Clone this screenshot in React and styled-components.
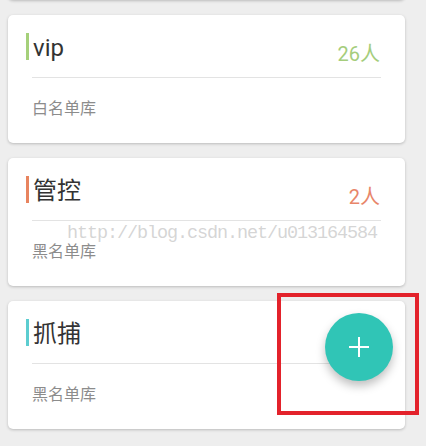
import React from 'react';
import styled, { createGlobalStyle } from 'styled-components';

const GlobalStyle = createGlobalStyle`
  html, body {
    margin: 0;
    padding: 0;
    background: #eeeeee;
  }
  body {
    font-family: Roboto, "Noto Sans CJK SC", sans-serif;
    overflow: hidden;
  }
`;

const Page = styled.div`
  position: relative;
  width: 426px;
  height: 446px;
  overflow: hidden;
  background: #eeeeee;
`;

// list is scrolled: the card above "vip" only shows its bottom edge
const List = styled.div`
  display: flex;
  flex-direction: column;
  gap: 15px;
  padding: 0 21px 0 8px;
  margin-top: -128px;
`;

const Card = styled.div`
  background: #ffffff;
  border-radius: 5px;
  box-shadow: 0 1px 3px rgba(0, 0, 0, 0.22);
  padding: 0 24px 24px;
  height: 128px;
  box-sizing: border-box;
`;

const Header = styled.div`
  display: flex;
  justify-content: space-between;
  height: 62px;
  margin-left: -6px;
`;

const Title = styled.div`
  align-self: flex-start;
  margin-top: 18px;
  height: 27px;
  border-left: 3px solid ${(p) => p.$accent};
  padding: 3px 0 0 4px;
  box-sizing: border-box;
  font-size: 24px;
  line-height: 25px;
  color: #333333;
`;

const Count = styled.div`
  align-self: flex-end;
  margin-bottom: 11px;
  margin-right: 1px;
  font-size: 20px;
  line-height: 24px;
  color: ${(p) => p.$color};
`;

const Divider = styled.div`
  height: 1px;
  background: #e3e3e3;
`;

const Sub = styled.div`
  margin-top: 21px;
  font-size: 16px;
  line-height: 20px;
  color: #8c8c8c;
`;

const Watermark = styled.div`
  position: absolute;
  left: 67px;
  top: 223px;
  font-family: "Liberation Mono", monospace;
  font-size: 18.5px;
  letter-spacing: -1.1px;
  color: rgba(185, 185, 185, 0.6);
  pointer-events: none;
`;

const Fab = styled.button`
  position: absolute;
  left: 325px;
  top: 313px;
  width: 68px;
  height: 68px;
  border: none;
  border-radius: 50%;
  background: #30c5b6;
  box-shadow: 0 5px 10px rgba(0, 0, 0, 0.25);
  display: flex;
  align-items: center;
  justify-content: center;
  padding: 0;
`;

const Highlight = styled.div`
  position: absolute;
  left: 277px;
  top: 293px;
  width: 142px;
  height: 122px;
  box-sizing: border-box;
  border: 4px solid #e3222b;
  pointer-events: none;
`;

const groups = [
  { title: 'vip', count: '26人', accent: '#a5d07a', color: '#a5cd7c', sub: '白名单库' },
  { title: '管控', count: '2人', accent: '#e8845f', color: '#e8866a', sub: '黑名单库' },
  { title: '抓捕', count: '', accent: '#5ccdd0', color: '#5ccdd0', sub: '黑名单库' },
];

export default function App() {
  return (
    <Page>
      <GlobalStyle />
      <List>
        <Card />
        {groups.map((g) => (
          <Card key={g.title}>
            <Header>
              <Title $accent={g.accent}>{g.title}</Title>
              {g.count && <Count $color={g.color}>{g.count}</Count>}
            </Header>
            <Divider />
            <Sub>{g.sub}</Sub>
          </Card>
        ))}
      </List>
      <Watermark>http://blog.csdn.net/u013164584</Watermark>
      <Fab>
        <svg width="22" height="22" viewBox="0 0 22 22">
          <path d="M11 1v20M1 11h20" stroke="#fff" strokeWidth="2" fill="none" />
        </svg>
      </Fab>
      <Highlight />
    </Page>
  );
}
